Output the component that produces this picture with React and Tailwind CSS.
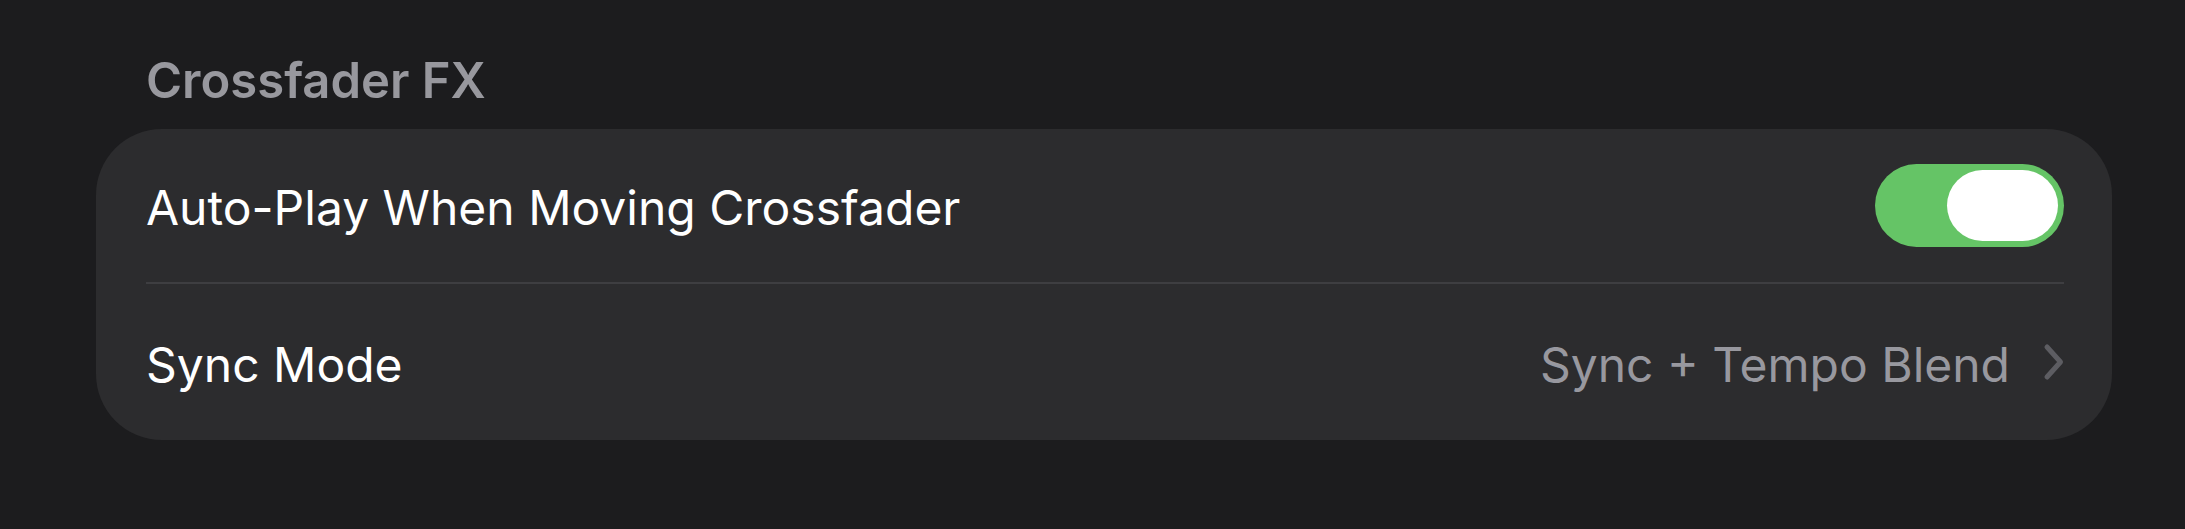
import React from "react";

function Toggle() {
  return (
    <div className="flex h-[83px] w-[189px] items-center justify-end rounded-full bg-[#65c466] pr-[6px]">
      <div className="h-[71px] w-[111px] rounded-full bg-white" />
    </div>
  );
}

function Chevron() {
  return (
    <svg width="22" height="38" viewBox="0 0 22 38" fill="none" className="block">
      <path d="M4 4 L17.5 19 L4 34" stroke="#5d5d62" strokeWidth="5" strokeLinecap="round" strokeLinejoin="round" />
    </svg>
  );
}

export default function App() {
  return (
    <div
      className="min-h-[529px] w-full bg-[#1c1c1e] pl-[96px] pr-[73px] pt-[51px]"
      style={{ fontFamily: "Inter, 'Noto Sans', sans-serif" }}
    >
      <div className="pl-[50px] text-[49px] font-semibold leading-[60px] text-[#98989e]">
        Crossfader FX
      </div>
      <div className="mt-[18px] rounded-[66px] bg-[#2c2c2e]">
        <div className="flex h-[153px] items-center justify-between pl-[50px] pr-[48px]">
          <span className="pt-[5px] text-[48px] leading-none text-white">Auto-Play When Moving Crossfader</span>
          <Toggle />
        </div>
        <div className="ml-[50px] mr-[48px] h-[2px] bg-[#3e3e41]" />
        <div className="flex h-[156px] items-center justify-between pl-[50px] pr-[47px]">
          <span className="pt-[5px] text-[48px] leading-none text-white">Sync Mode</span>
          <div className="flex items-center gap-[33px]">
            <span className="pt-[5px] text-[48px] leading-none text-[#98989f]">Sync + Tempo Blend</span>
            <Chevron />
          </div>
        </div>
      </div>
    </div>
  );
}
